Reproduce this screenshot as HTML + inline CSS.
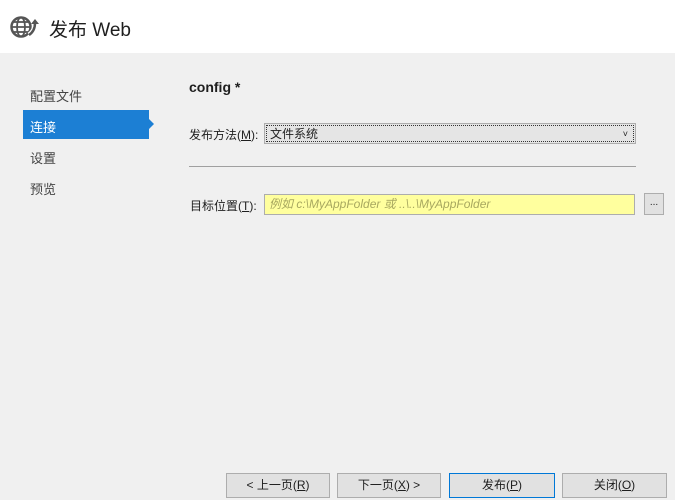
<!DOCTYPE html>
<html><head><meta charset="utf-8"><style>
*{margin:0;padding:0;box-sizing:border-box}
body{width:675px;height:500px;background:#f0f0f0;font-family:"Liberation Sans","Noto Sans CJK SC",sans-serif;font-size:12px;color:#1e1e1e;position:relative;overflow:hidden}
.hdr{position:absolute;left:0;top:0;width:675px;height:53px;background:#fff}
.hdr .t{position:absolute;left:49px;top:15px;font-size:19px;color:#1e1e1e}
.a{position:absolute}
.nav{position:absolute;left:30px;font-size:13px;color:#444}
.sel{position:absolute;left:23px;top:110px;width:126px;height:29px;background:#1c7fd4}
.sel:after{content:"";position:absolute;right:-5px;top:9px;border-left:5px solid #1c7fd4;border-top:5px solid transparent;border-bottom:5px solid transparent}
.btn{position:absolute;top:473px;height:25px;background:#e1e1e1;border:1px solid #adadad;text-align:center;line-height:23px;font-size:12px}
u{text-decoration:underline}
</style></head><body>
<div class="hdr">
<svg class="a" style="left:10px;top:14px" width="32" height="26" viewBox="0 0 32 26">
<circle cx="11" cy="13" r="9.5" fill="none" stroke="#555" stroke-width="2.5"/>
<line x1="2" y1="13" x2="20" y2="13" stroke="#555" stroke-width="1.8"/>
<line x1="3.5" y1="8" x2="18.5" y2="8" stroke="#555" stroke-width="1.8"/>
<line x1="3.5" y1="18" x2="18.5" y2="18" stroke="#555" stroke-width="1.8"/>
<ellipse cx="11" cy="13" rx="4" ry="9.5" fill="none" stroke="#555" stroke-width="1.8"/>
<path d="M19 21 Q25 17 25 9" fill="none" stroke="#fff" stroke-width="5"/>
<path d="M19 21 Q25 17 25 9" fill="none" stroke="#555" stroke-width="2.5"/>
<path d="M21 10 L25 5 L29 10 Z" fill="#555"/>
</svg>
<div class="t">发布 Web</div>
</div>
<div class="nav" style="top:86px">配置文件</div>
<div class="sel"></div>
<div class="nav" style="top:117px;color:#fff">连接</div>
<div class="nav" style="top:148px">设置</div>
<div class="nav" style="top:179px">预览</div>
<div class="a" style="left:189px;top:79px;font-size:14px;font-weight:bold">config *</div>
<div class="a" style="left:189px;top:126px">发布方法(<u>M</u>):</div>
<div class="a" style="left:264px;top:123px;width:372px;height:21px;background:#e5e5e5;border:1px solid #adadad"><div style="position:absolute;left:1px;top:1px;right:1px;bottom:1px;border:1px dotted #333;padding-left:3px;line-height:16px">文件系统<span style="position:absolute;right:5px;top:0;font-size:9px">˅</span></div></div>
<div class="a" style="left:189px;top:166px;width:447px;height:1px;background:#a0a0a0"></div>
<div class="a" style="left:190px;top:197px">目标位置(<u>T</u>):</div>
<div class="a" style="left:264px;top:194px;width:371px;height:21px;background:#ffff9e;border:1px solid #adadad;padding-left:4px;line-height:19px;font-style:italic;color:#a8a860">例如 c:\MyAppFolder 或 ..\..\MyAppFolder</div>
<div class="a" style="left:644px;top:193px;width:20px;height:22px;background:#e1e1e1;border:1px solid #adadad;text-align:center;line-height:18px;font-size:10px">...</div>
<div class="btn" style="left:226px;width:104px">&lt; 上一页(<u>R</u>)</div>
<div class="btn" style="left:337px;width:104px">下一页(<u>X</u>) &gt;</div>
<div class="btn" style="left:449px;width:106px;border-color:#0078d7">发布(<u>P</u>)</div>
<div class="btn" style="left:562px;width:105px">关闭(<u>O</u>)</div>
</body></html>
